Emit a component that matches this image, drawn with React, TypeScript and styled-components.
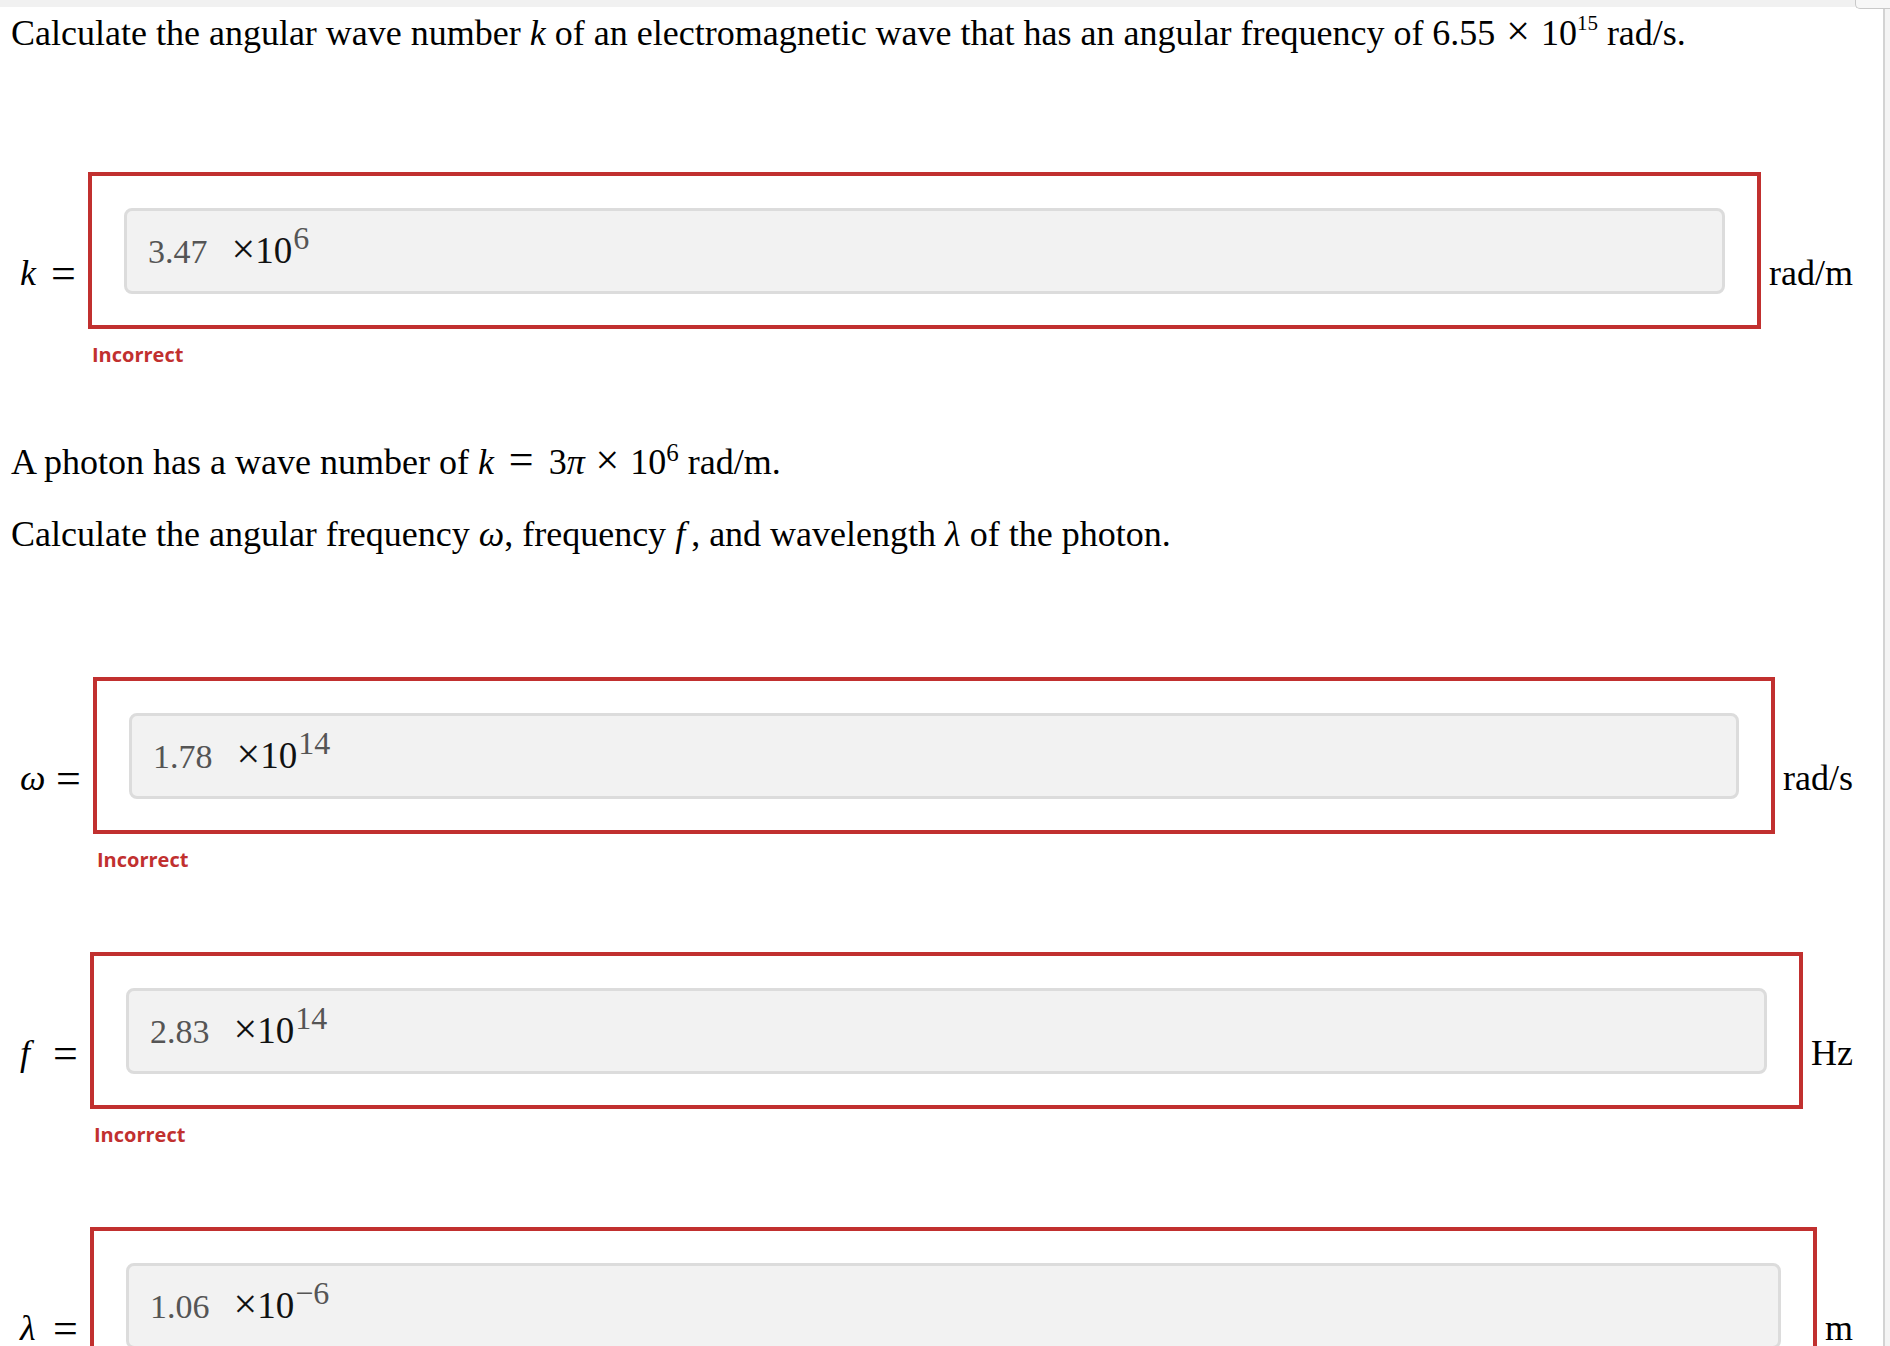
import styled, { createGlobalStyle } from "styled-components";

type FieldPropsType = {
  symbol: string;
  symbolWidth: number;
  value: string;
  exponent: string;
  unit: string;
  space: number;
};

const GlobalStyle = createGlobalStyle`
  html, body {
    margin: 0;
    padding: 0;
    background: #f4f4f4;
  }
  * {
    box-sizing: border-box;
  }
`;

const Field = (props: FieldPropsType) => {
  return (
    <StyledField $space={props.space}>
      <Label>
        <Var $width={props.symbolWidth}>{props.symbol}</Var>
        <Eq>=</Eq>
      </Label>
      <Answer>
        <AnswerBox>
          <Input>
            <Value>{props.value}</Value>
            <Times>
              <Cross>×</Cross>10
            </Times>
            <Exponent>{props.exponent}</Exponent>
          </Input>
        </AnswerBox>
        <Feedback>Incorrect</Feedback>
      </Answer>
      <Unit>{props.unit}</Unit>
    </StyledField>
  );
};

export default function App() {
  return (
    <Page>
      <GlobalStyle />
      <Tab />
      <Sheet>
        <TopStrip />
        <Question $space={6}>
          Calculate the angular wave number <MathVar>k</MathVar> of an electromagnetic wave that has an
          angular frequency of 6.55<Op $big>×</Op>10<Sup $size={21} $raise={15}>15</Sup> rad/s.
        </Question>

        <Field symbol="k" symbolWidth={20} value="3.47" exponent="6" unit="rad/m" space={118} />

        <Question $space={73}>
          A photon has a wave number of <MathVar>k</MathVar>
          <Op $wide>=</Op>3<MathVar>π</MathVar>
          <Op $big>×</Op>10<Sup $size={25} $raise={13}>6</Sup> rad/m.
        </Question>
        <Question $space={31}>
          Calculate the angular frequency <MathVar>ω</MathVar>, frequency <MathVar $after={6}>f</MathVar>,
          and wavelength <MathVar>λ</MathVar> of the photon.
        </Question>

        <Field symbol="ω" symbolWidth={25} value="1.78" exponent="14" unit="rad/s" space={122} />
        <Field symbol="f" symbolWidth={22} value="2.83" exponent="14" unit="Hz" space={78} />
        <Field symbol="λ" symbolWidth={22} value="1.06" exponent="−6" unit="m" space={78} />
      </Sheet>
    </Page>
  );
}

const Page = styled.div`
  position: relative;
  min-height: 100vh;
  background: #f4f4f4;
  font-family: "Liberation Serif", "Times New Roman", serif;
  color: #000;
`;

const Tab = styled.div`
  position: absolute;
  top: 0;
  left: 1855px;
  right: 0;
  height: 9px;
  background: #f7f7f7;
  border: 1px solid #c9c9c9;
  border-top: none;
  border-right: none;
  border-bottom-left-radius: 5px;
  z-index: 2;
`;

const Sheet = styled.main`
  width: 1885px;
  min-height: 100vh;
  padding: 0 30px 60px 0;
  background: #fff;
  border-right: 2px solid #d3d3d3;
`;

const TopStrip = styled.div`
  height: 7px;
  margin-right: -30px;
  background: #f1f1f1;
`;

const Question = styled.p<{ $space: number }>`
  margin: ${(p) => p.$space}px 0 0 11px;
  font-size: 36px;
  line-height: 41px;
`;

const MathVar = styled.i<{ $after?: number }>`
  margin-right: ${(p) => p.$after ?? 0}px;
  font-family: "Liberation Serif", "DejaVu Serif", serif;
  font-style: italic;
`;

const Op = styled.span<{ $big?: boolean; $wide?: boolean }>`
  margin: 0 ${(p) => (p.$wide ? "0.34em" : "0.26em")};
  font-size: ${(p) => (p.$wide ? "44px" : p.$big ? "42px" : "40px")};
  line-height: 0;
`;

const Sup = styled.sup<{ $size: number; $raise: number }>`
  font-size: ${(p) => p.$size}px;
  line-height: 0;
  vertical-align: ${(p) => p.$raise}px;
`;

const StyledField = styled.div<{ $space: number }>`
  display: flex;
  align-items: flex-start;
  margin-top: ${(p) => p.$space}px;
  padding-left: 20px;
`;

const Label = styled.div`
  display: flex;
  flex-shrink: 0;
  margin-top: 81px;
  margin-right: 11px;
  font-size: 36px;
  line-height: 41px;
`;

const Var = styled.i<{ $width: number }>`
  display: inline-block;
  width: ${(p) => p.$width}px;
  font-style: italic;
`;

const Eq = styled.span`
  display: inline-block;
  width: 27px;
  margin-left: 10px;
  font-size: 44px;
  text-align: center;
`;

const Answer = styled.div`
  display: flex;
  flex: 1;
  flex-direction: column;
  min-width: 0;
`;

const AnswerBox = styled.div`
  height: 157px;
  padding: 32px 32px 31px;
  border: 4px solid #c1302f;
`;

const Input = styled.div`
  height: 86px;
  padding: 20px 21px 0;
  background: #f2f2f2;
  border: 3px solid #dcdcdc;
  border-radius: 8px;
  font-size: 34px;
  line-height: 40px;
  white-space: nowrap;
`;

const Value = styled.span`
  color: #555;
`;

const Times = styled.span`
  margin-left: 24px;
  font-size: 37px;
  color: #111;
`;

const Cross = styled.span`
  font-size: 42px;
  line-height: 0;
`;

const Exponent = styled.span`
  margin-left: 1px;
  font-size: 32px;
  line-height: 0;
  vertical-align: 14px;
  color: #555;
`;

const Feedback = styled.div`
  margin: 12px 0 0 4px;
  font-family: "Open Sans", "Liberation Sans", sans-serif;
  font-weight: 700;
  font-size: 20px;
  line-height: 28px;
  color: #c1302f;
`;

const Unit = styled.div`
  flex-shrink: 0;
  margin-top: 81px;
  margin-left: 8px;
  font-size: 36px;
  line-height: 41px;
`;
